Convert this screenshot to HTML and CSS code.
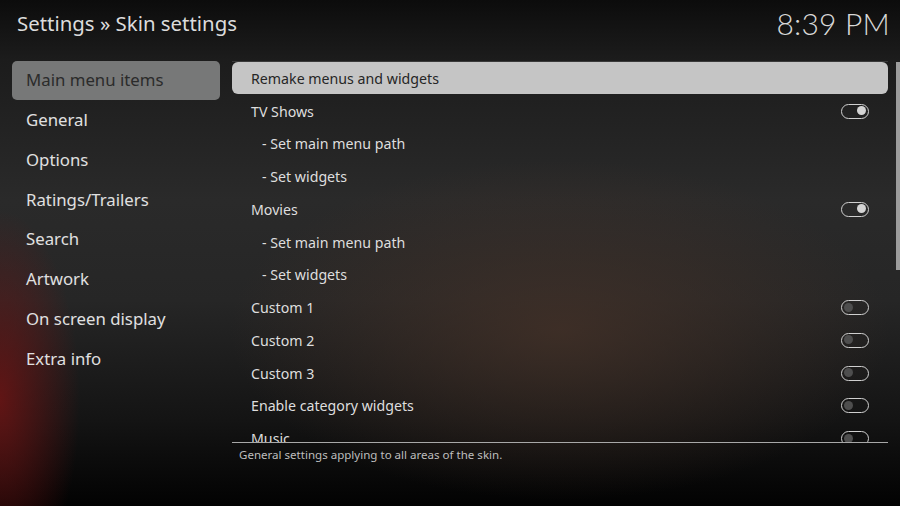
FILE: index.html
```html
<!DOCTYPE html>
<html>
<head>
<meta charset="utf-8">
<link rel="stylesheet" href="styles.css">
</head>
<body>
<div class="screen">
  <header class="top">
    <div class="title">Settings » Skin settings</div>
    <div class="clock">8:39 PM</div>
  </header>
  <div class="main">
    <nav class="side">
      <div class="side-item active">Main menu items</div>
      <div class="side-item">General</div>
      <div class="side-item">Options</div>
      <div class="side-item">Ratings/Trailers</div>
      <div class="side-item">Search</div>
      <div class="side-item">Artwork</div>
      <div class="side-item">On screen display</div>
      <div class="side-item">Extra info</div>
    </nav>
    <section class="content">
      <div class="list">
        <div class="row active"><span>Remake menus and widgets</span></div>
        <div class="row"><span>TV Shows</span><i class="tog on"></i></div>
        <div class="row sub"><span>- Set main menu path</span></div>
        <div class="row sub"><span>- Set widgets</span></div>
        <div class="row"><span>Movies</span><i class="tog on"></i></div>
        <div class="row sub"><span>- Set main menu path</span></div>
        <div class="row sub"><span>- Set widgets</span></div>
        <div class="row"><span>Custom 1</span><i class="tog"></i></div>
        <div class="row"><span>Custom 2</span><i class="tog"></i></div>
        <div class="row"><span>Custom 3</span><i class="tog"></i></div>
        <div class="row"><span>Enable category widgets</span><i class="tog"></i></div>
        <div class="row"><span>Music</span><i class="tog"></i></div>
      </div>
      <div class="desc">General settings applying to all areas of the skin.</div>
    </section>
    <div class="scroll"><div class="thumb"></div></div>
  </div>
</div>
</body>
</html>
```
FILE: styles.css
```css
* { box-sizing: border-box; margin: 0; padding: 0; }
html, body { width: 900px; height: 506px; overflow: hidden; background: #000; }
body { font-family: "Noto Sans", "Open Sans", sans-serif; color: #e2e2e2; }
.screen {
  width: 900px; height: 506px; position: relative;
  background:
    radial-gradient(ellipse 80px 190px at 0px 400px, rgba(115,20,20,0.8), rgba(115,20,20,0) 100%),
    radial-gradient(ellipse 330px 170px at 560px 330px, rgba(70,50,40,0.75), rgba(70,50,40,0) 100%),
    linear-gradient(180deg, #0c0c0c 0px, #1c1c1c 60px, #2a2a2a 200px, #262626 300px, #141414 420px, #020202 506px);
}
.top { display: flex; justify-content: space-between; align-items: flex-start; height: 61px; padding: 0 10px 0 17px; }
.title { font-size: 20.4px; line-height: 24px; margin-top: 11px; color: #dcdcdc; }
.clock { font-family: "Lato", "Open Sans", sans-serif; font-weight: 300; font-size: 30px; line-height: 34px; margin-top: 6px; color: #d8d8d8; letter-spacing: 0.2px; }
.main { display: flex; align-items: flex-start; }
.side { width: 232px; padding-left: 12px; padding-right: 12px; }
.side-item { height: 39.8px; line-height: 38.5px; padding-left: 14px; font-size: 16.8px; color: #e0e0e0; border-radius: 5px; }
.side-item.active { background: #777878; color: #2b2b2b; height: 39px; margin-bottom: 1px; }
.content { width: 656px; }
.list { height: 382px; overflow: hidden; border-top: 1px solid #3a3a3a; border-bottom: 1px solid #a8a8a8; }
.row { height: 32.75px; display: flex; align-items: center; justify-content: space-between; padding-left: 19px; padding-right: 19px; font-size: 14.2px; color: #dedede; }
.row.active { background: #c5c5c5; color: #262626; border-radius: 6px; height: 32px; margin-bottom: 0.75px; }
.row.sub { padding-left: 30px; }
.tog { display: block; width: 28px; height: 15px; border: 1.6px solid #cfcfcf; border-radius: 8px; position: relative; }
.tog::after { content: ""; position: absolute; top: 1.5px; left: 2px; width: 9px; height: 9px; border-radius: 50%; background: #4e4e4e; }
.tog.on::after { left: auto; right: 2px; background: #d4d4d4; }
.desc { font-size: 11.55px; color: #bdbdbd; padding-left: 7px; margin-top: 4px; }
.scroll { width: 4px; margin-left: 8px; margin-top: 1px; height: 381px; }
.thumb { height: 208px; background: #9c9c9c; }
```
